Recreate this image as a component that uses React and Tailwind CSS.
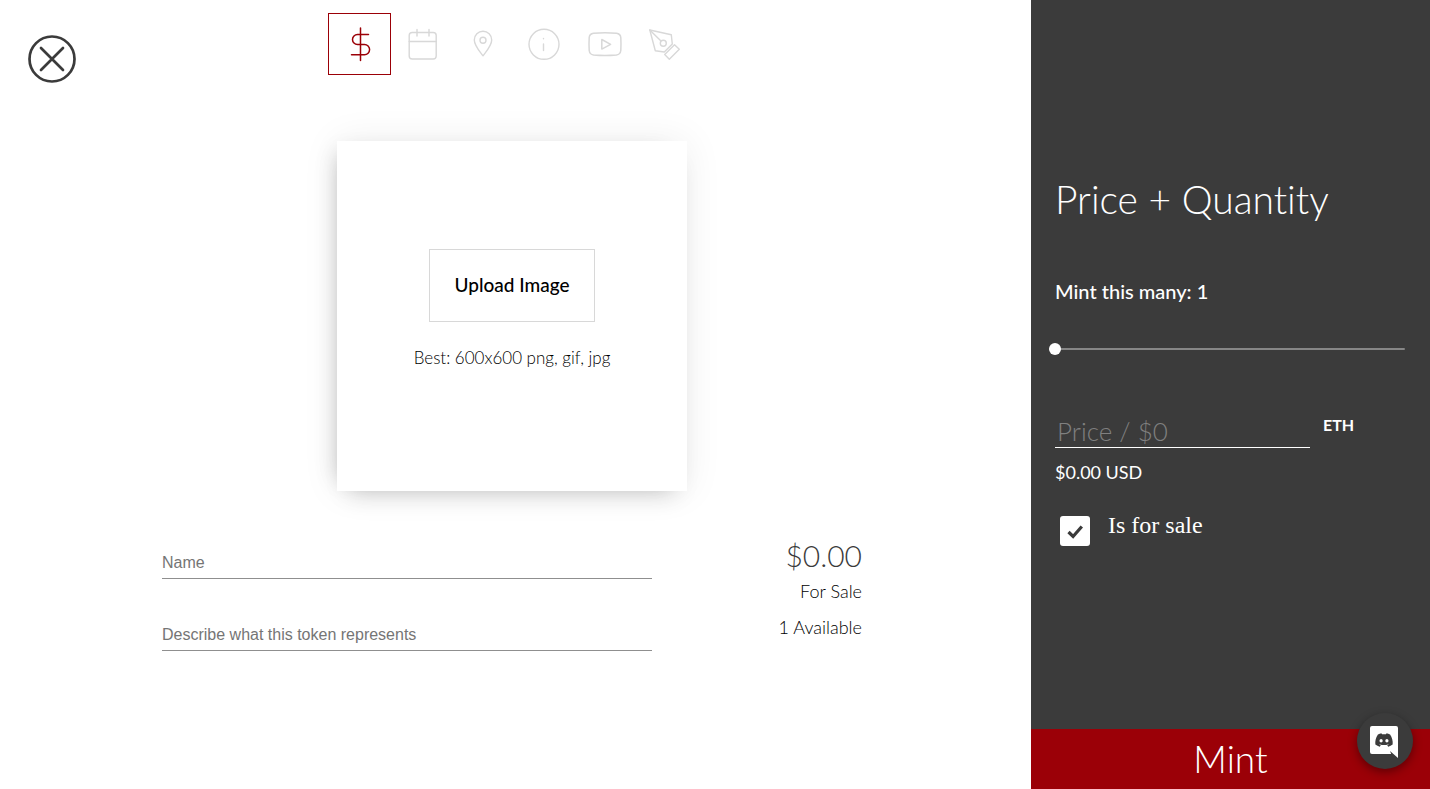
import { useState } from "react";
import { FaDiscord } from "react-icons/fa";

const stroke = {
  fill: "none",
  stroke: "currentColor",
  strokeLinecap: "round",
  strokeLinejoin: "round",
};

function DollarIcon() {
  return (
    <svg width="36" height="36" viewBox="0 0 36 36" strokeWidth="1.5" {...stroke} aria-hidden="true">
      <path d="M18.500 2v32.500M26.500 8.500h-11a5 5 0 0 0 0 10h7a5 5 0 0 1 0 10.200H9.500" />
    </svg>
  );
}

function CalendarIcon() {
  return (
    <svg width="36" height="36" viewBox="0 0 36 36" strokeWidth="1.4" {...stroke} aria-hidden="true">
      <rect x="5.200" y="6.500" width="27" height="26.500" rx="3" />
      <path d="M5.200 15.500h27M13 3.500v6.500M25 3.500v6.500" />
    </svg>
  );
}

function PinIcon() {
  return (
    <svg width="36" height="36" viewBox="0 0 36 36" strokeWidth="1.4" {...stroke} aria-hidden="true">
      <path d="M18 29.800C14 24.500 9.300 19.500 9.300 14a8.700 8.700 0 0 1 17.400 0C26.700 19.500 22 24.500 18 29.800z" />
      <circle cx="18" cy="14.200" r="3" />
    </svg>
  );
}

function InfoIcon() {
  return (
    <svg width="36" height="36" viewBox="0 0 36 36" strokeWidth="1.4" {...stroke} aria-hidden="true">
      <circle cx="18" cy="18.300" r="15" />
      <path d="M17.500 18v6.500M17.500 12.500v.2" />
    </svg>
  );
}

function VideoIcon() {
  return (
    <svg width="36" height="36" viewBox="0 0 36 36" strokeWidth="1.5" {...stroke} aria-hidden="true">
      <path d="M6.500 7.200Q18 6.200 29.500 7.200q4 .6 4.300 4.300.4 6.500 0 13-.5 4-4.300 4.500-11.500 1-23 0-3.800-.5-4.300-4.500-.4-6.500 0-13Q2.500 7.800 6.500 7.200z" />
      <path d="M14.800 13.500v9.600l8.800-4.800z" />
    </svg>
  );
}

function PenIcon() {
  return (
    <svg width="36" height="36" viewBox="0 0 36 36" strokeWidth="1.4" {...stroke} aria-hidden="true">
      <path d="M1.800 4 23.300 8.800l1 9.200-8 8-9-1.200z" />
      <path d="M1.800 4l11.200 11" />
      <circle cx="15.300" cy="17.300" r="3" />
      <path d="M26.500 18.800l4.800 4.500-10 10-4.600-4.700z" />
    </svg>
  );
}

const steps = [
  { name: "Price", Icon: DollarIcon },
  { name: "Date", Icon: CalendarIcon },
  { name: "Location", Icon: PinIcon },
  { name: "Information", Icon: InfoIcon },
  { name: "Video", Icon: VideoIcon },
  { name: "Design", Icon: PenIcon },
];

function StepNav({ active, onSelect }) {
  return (
    <nav aria-label="Steps" className="flex">
      {steps.map(({ name, Icon }, i) => (
        <button
          key={name}
          type="button"
          aria-label={name}
          onClick={() => onSelect(i)}
          className={
            i === active
              ? "flex h-[62px] w-[63px] items-center justify-center border border-[#9b0007] text-[#9b0007]"
              : "flex h-[62px] w-[61px] items-center justify-center text-[#d8d8d8]"
          }
        >
          <Icon />
        </button>
      ))}
    </nav>
  );
}

function TokenForm({ quantity, forSale }) {
  return (
    <form className="flex w-[700px] justify-between pt-[46px]">
      <div className="flex w-[70%] flex-col gap-10 pt-[10px]">
        <input
          aria-label="Name"
          placeholder="Name"
          className="h-8 border-b border-[#8f8f8f] text-base outline-none placeholder:text-[#757575] font-['Liberation_Sans',sans-serif]"
        />
        <input
          aria-label="Description"
          placeholder="Describe what this token represents"
          className="h-8 border-b border-[#8f8f8f] text-base outline-none placeholder:text-[#757575] font-['Liberation_Sans',sans-serif]"
        />
      </div>
      <div className="flex flex-col items-end text-right text-lg font-light text-black">
        <p className="text-[30px] leading-9 text-[#3b3b3b]">$0.00</p>
        <p className="leading-9">{forSale ? "For Sale" : "Not For Sale"}</p>
        <p className="leading-9">{quantity} Available</p>
      </div>
    </form>
  );
}

function PricePanel({ quantity, setQuantity, forSale, setForSale }) {
  return (
    <aside className="flex w-[399px] shrink-0 flex-col bg-[#3b3b3b] text-white">
      <div className="flex-1 pt-[175px] pr-[25px] pl-6">
        <h1 className="text-[39px] font-light leading-[48px] [font-variant-ligatures:none]">Price + Quantity</h1>
        <label htmlFor="quantity" className="mt-[52px] block text-xl font-medium leading-8">
          Mint this many: {quantity}
        </label>
        <input
          id="quantity"
          type="range"
          min="1"
          max="100"
          value={quantity}
          onChange={(e) => setQuantity(Number(e.target.value))}
          className="mt-9 -ml-[6px] block h-3 w-[calc(100%+6px)] appearance-none bg-transparent [&::-webkit-slider-runnable-track]:h-[2px] [&::-webkit-slider-runnable-track]:rounded-full [&::-webkit-slider-runnable-track]:bg-[#868686] [&::-webkit-slider-thumb]:-mt-[5px] [&::-webkit-slider-thumb]:size-3 [&::-webkit-slider-thumb]:appearance-none [&::-webkit-slider-thumb]:rounded-full [&::-webkit-slider-thumb]:bg-white"
        />
        <div className="mt-[61px] flex gap-[13px]">
          <input
            id="price"
            aria-label="Price"
            placeholder="Price / $0"
            className="h-8 w-[255px] border-b border-white px-[2px] text-[26px] font-light outline-none placeholder:text-[#808080]"
          />
          <label htmlFor="price" className="text-base font-bold leading-[18px]">ETH</label>
        </div>
        <p className="mt-[10px] text-lg leading-7">$0.00 USD</p>
        <div className="mt-7 flex gap-[18px] pl-[5px]">
          <span className="mt-[2px] grid size-[30px]">
            <input
              id="for-sale"
              type="checkbox"
              checked={forSale}
              onChange={(e) => setForSale(e.target.checked)}
              className="col-start-1 row-start-1 size-[30px] appearance-none rounded-[3px] bg-white"
            />
            {forSale && (
              <svg
                viewBox="0 0 30 30"
                className="pointer-events-none col-start-1 row-start-1 size-[30px]"
                fill="none"
                stroke="#3b3b3b"
                strokeWidth="3.200"
                aria-hidden="true"
              >
                <path d="M8.500 16l4.600 4.500 8.700-10" />
              </svg>
            )}
          </span>
          <label htmlFor="for-sale" className="text-2xl leading-[22px] font-['Liberation_Serif',serif]">
            Is for sale
          </label>
        </div>
      </div>
      <button type="button" className="h-[60px] bg-[#9b0007] text-[37px] font-light leading-[58px]">
        Mint
      </button>
    </aside>
  );
}

export default function App() {
  const [active, setActive] = useState(0);
  const [quantity, setQuantity] = useState(1);
  const [forSale, setForSale] = useState(true);

  return (
    <div className="flex min-h-screen bg-white font-['Lato',sans-serif]">
      <main className="flex flex-1 flex-col items-center pr-[7px]">
        <header className="grid w-full grid-cols-[1fr_auto_1fr] items-start pt-[13px]">
          <button type="button" aria-label="Close" className="mt-[22px] ml-7 size-12 text-[#3b3b3b]">
            <svg width="48" height="48" viewBox="0 0 48 48" strokeWidth="2.700" {...stroke} aria-hidden="true">
              <circle cx="24" cy="24" r="22.500" />
              <path d="M13 13l22 22M35 13L13 35" />
            </svg>
          </button>
          <StepNav active={active} onSelect={setActive} />
        </header>
        <section className="mt-[58px] flex size-[350px] flex-col items-center bg-white pt-[108px] shadow-[0_0_36px_rgba(0,0,0,0.07),0_14px_22px_-12px_rgba(0,0,0,0.17),-12px_0_20px_-12px_rgba(0,0,0,0.17)]">
          <button type="button" className="h-[73px] w-[166px] border border-[#d8d8d8] text-[19px] font-medium text-black">
            Upload Image
          </button>
          <p className="mt-[22px] text-[17px] font-light leading-7 text-black">Best: 600x600 png, gif, jpg</p>
        </section>
        <TokenForm quantity={quantity} forSale={forSale} />
      </main>
      <PricePanel quantity={quantity} setQuantity={setQuantity} forSale={forSale} setForSale={setForSale} />
      <button
        type="button"
        aria-label="Open Discord chat"
        className="fixed right-[17px] bottom-5 flex size-14 items-center justify-center rounded-full bg-[#3b3b3b] shadow-[0_3px_10px_rgba(0,0,0,0.4)]"
      >
        <svg width="32" height="34" viewBox="0 0 32 34" aria-hidden="true">
          <path d="M3 2h24a2 2 0 0 1 2 2v30l-8-7 1.200 3H3a2 2 0 0 1-2-2V4a2 2 0 0 1 2-2z" fill="#fff" />
          <FaDiscord x="5.500" y="6.500" size="19" color="#3b3b3b" />
        </svg>
      </button>
    </div>
  );
}
